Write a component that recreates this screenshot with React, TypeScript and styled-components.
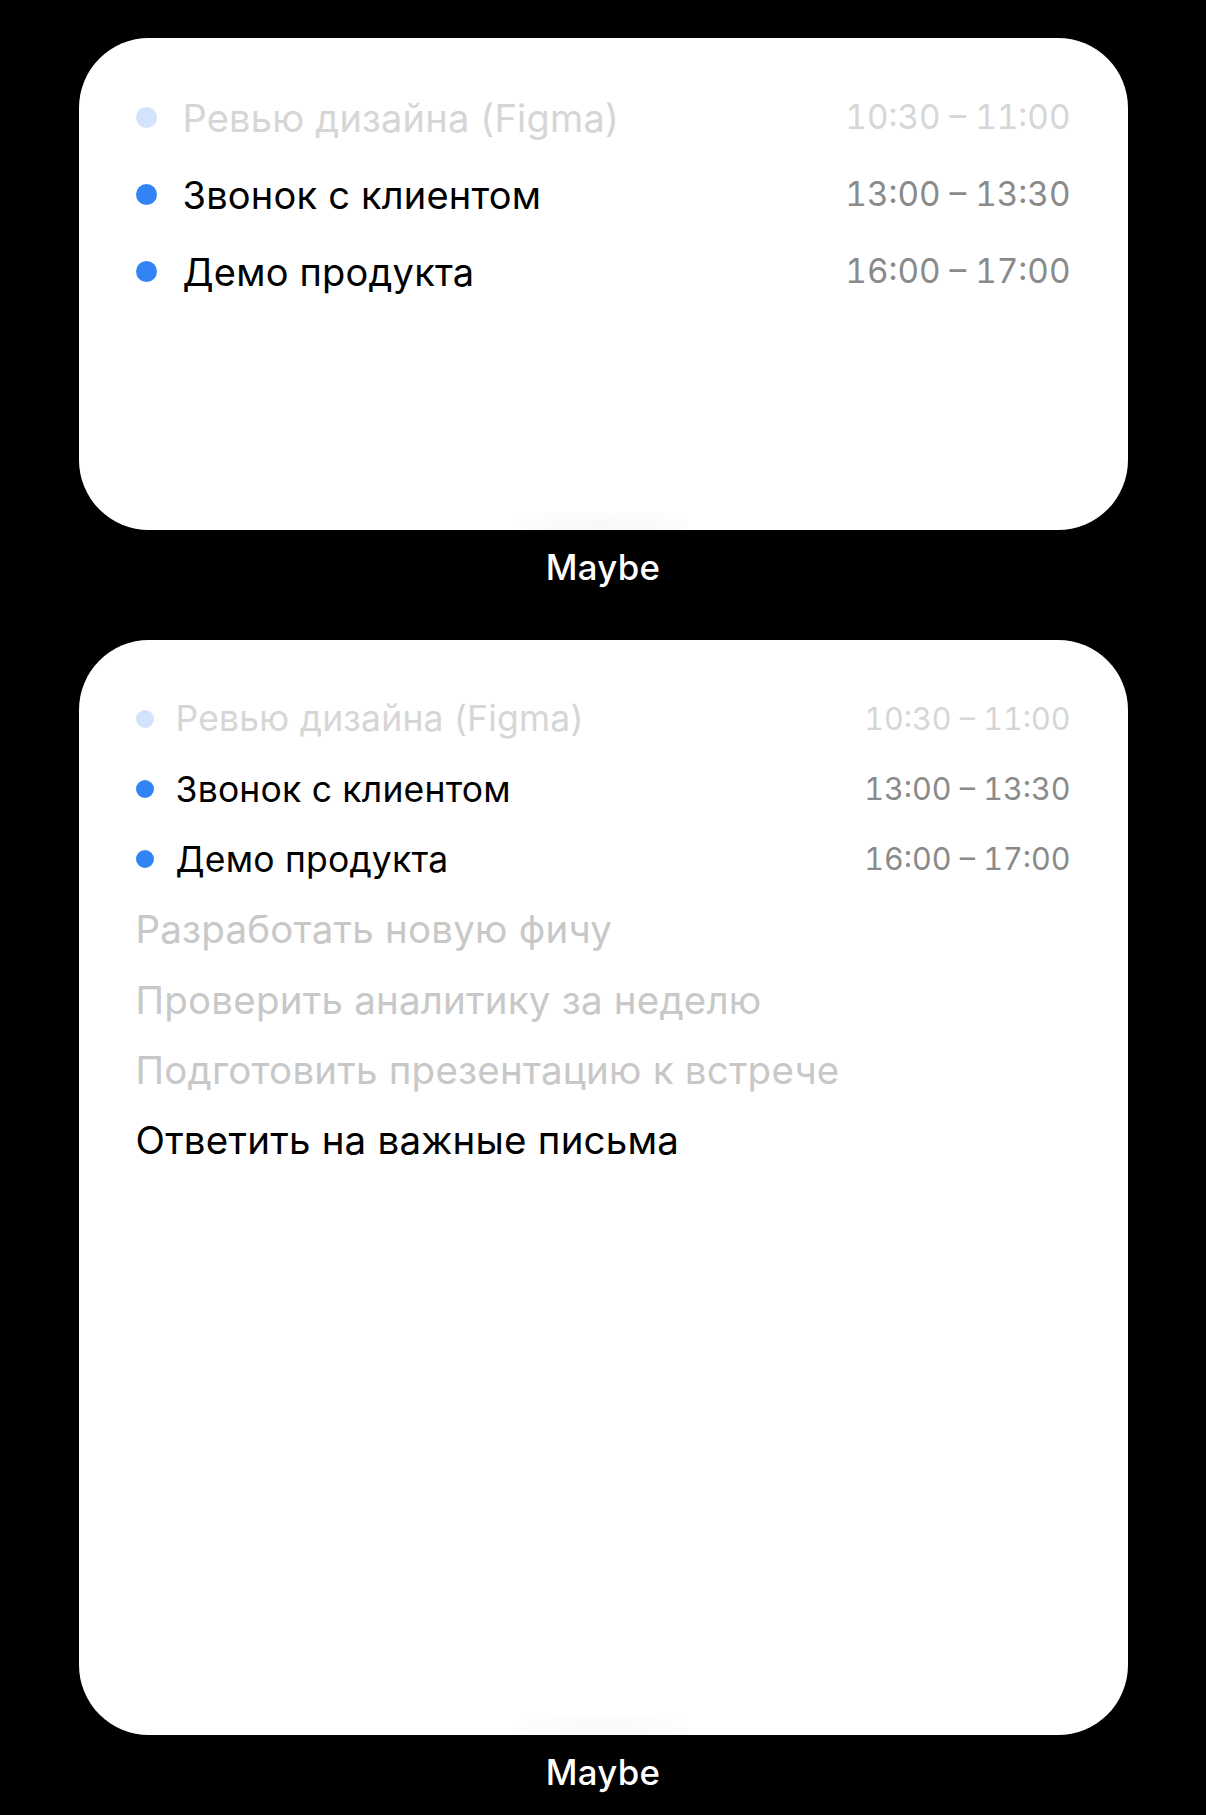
import React from "react";
import styled, { createGlobalStyle } from "styled-components";

const GlobalStyle = createGlobalStyle`
  html, body {
    margin: 0;
    padding: 0;
    background: #000;
  }
  body {
    font-family: Inter, "Noto Sans", "Liberation Sans", sans-serif;
    -webkit-font-smoothing: antialiased;
  }
`;

const Page = styled.div`
  display: flex;
  flex-direction: column;
  align-items: center;
  padding-top: 38px;
  min-height: 1815px;
  box-sizing: border-box;
  background: #000;
`;

const WidgetBlock = styled.section`
  display: flex;
  flex-direction: column;
  align-items: center;
  margin-bottom: 53px;
`;

const Widget = styled.div<{ $height: number; $padTop: number }>`
  position: relative;
  width: 1049px;
  height: ${(p) => p.$height}px;
  box-sizing: border-box;
  padding: ${(p) => p.$padTop}px 57px 0 57px;
  background: #fff;
  border-radius: 70px;
  display: flex;
  flex-direction: column;
  overflow: hidden;
`;

const BottomGlow = styled.div`
  position: absolute;
  left: 50%;
  bottom: 0;
  width: 170px;
  height: 18px;
  transform: translateX(-50%);
  border-radius: 9px 9px 0 0;
  background: radial-gradient(ellipse at 50% 100%, #f7f7f7 0%, #fbfbfb 50%, #fff 100%);
`;

const Row = styled.div<{ $h: number; $gap: number }>`
  display: flex;
  align-items: center;
  height: ${(p) => p.$h}px;
  gap: ${(p) => p.$gap}px;
`;

const Dot = styled.span<{ $size: number; $faded?: boolean }>`
  flex: none;
  width: ${(p) => p.$size}px;
  height: ${(p) => p.$size}px;
  border-radius: 50%;
  background: ${(p) => (p.$faded ? "#d3e3fb" : "#3284f5")};
`;

const EventTitle = styled.span<{ $size: number; $faded?: boolean }>`
  flex: 1;
  font-size: ${(p) => p.$size}px;
  line-height: 1;
  font-weight: 400;
  color: ${(p) => (p.$faded ? "#d6d6d6" : "#000")};
  white-space: nowrap;
  letter-spacing: 0.2px;
`;

const EventTime = styled.span<{ $size: number; $faded?: boolean }>`
  flex: none;
  font-size: ${(p) => p.$size}px;
  line-height: 1;
  font-weight: 400;
  font-variant-numeric: tabular-nums;
  color: ${(p) => (p.$faded ? "#d6d6d6" : "#8a8a8a")};
  white-space: nowrap;
`;

const TaskText = styled.span<{ $done?: boolean }>`
  font-size: 38.5px;
  line-height: 1;
  letter-spacing: 0.2px;
  color: ${(p) => (p.$done ? "#c8c8c8" : "#000")};
  white-space: nowrap;
`;

const Label = styled.div`
  margin-top: 17px;
  height: 40px;
  line-height: 40px;
  font-size: 34.8px;
  font-weight: 500;
  color: #fff;
  letter-spacing: 0.3px;
`;

type Ev = { title: string; time: string; faded?: boolean };

const events: Ev[] = [
  { title: "Ревью дизайна (Figma)", time: "10:30 – 11:00", faded: true },
  { title: "Звонок с клиентом", time: "13:00 – 13:30" },
  { title: "Демо продукта", time: "16:00 – 17:00" },
];

const tasks = [
  { text: "Разработать новую фичу", done: true },
  { text: "Проверить аналитику за неделю", done: true },
  { text: "Подготовить презентацию к встрече", done: true },
  { text: "Ответить на важные письма", done: false },
];

export default function App() {
  return (
    <>
      <GlobalStyle />
      <Page>
        <WidgetBlock>
          <Widget $height={492} $padTop={41}>
            {events.map((e) => (
              <Row key={e.title} $h={77} $gap={26}>
                <Dot $size={21} $faded={e.faded} />
                <EventTitle $size={38} $faded={e.faded}>
                  {e.title}
                </EventTitle>
                <EventTime $size={33.3} $faded={e.faded}>
                  {e.time}
                </EventTime>
              </Row>
            ))}
            <BottomGlow />
          </Widget>
          <Label>Maybe</Label>
        </WidgetBlock>
        <WidgetBlock>
          <Widget $height={1095} $padTop={44}>
            {events.map((e) => (
              <Row key={e.title} $h={70.2} $gap={22}>
                <Dot $size={18} $faded={e.faded} />
                <EventTitle $size={35.5} $faded={e.faded}>
                  {e.title}
                </EventTitle>
                <EventTime $size={30.5} $faded={e.faded}>
                  {e.time}
                </EventTime>
              </Row>
            ))}
            {tasks.map((t) => (
              <Row key={t.text} $h={70.2} $gap={0}>
                <TaskText $done={t.done}>{t.text}</TaskText>
              </Row>
            ))}
            <BottomGlow />
          </Widget>
          <Label>Maybe</Label>
        </WidgetBlock>
      </Page>
    </>
  );
}
